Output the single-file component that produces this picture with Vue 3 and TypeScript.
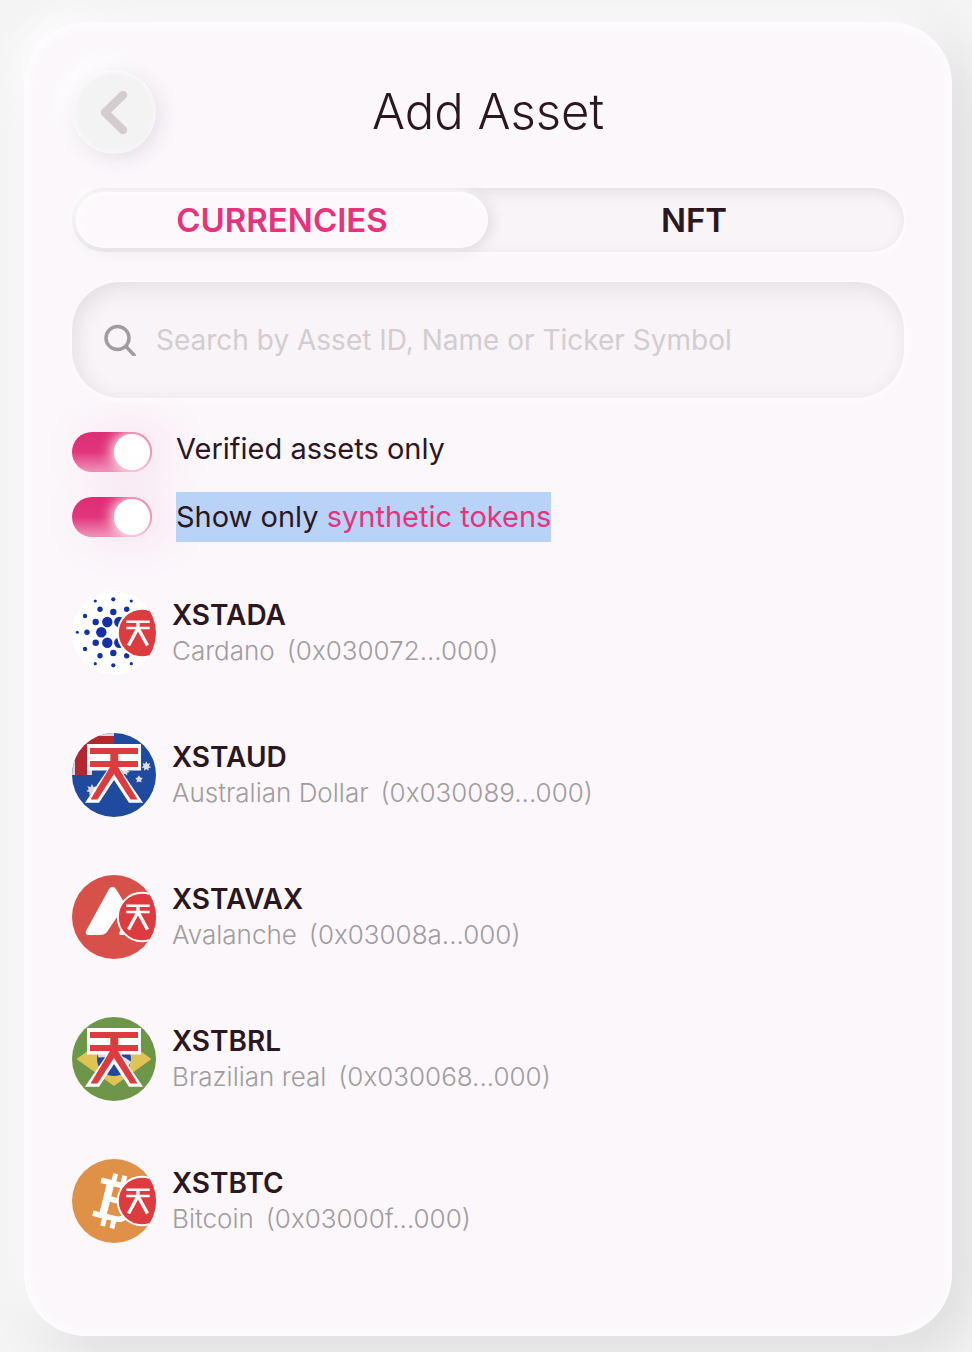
<script setup lang="ts">
import { ref } from 'vue'

type IconKind = 'ada' | 'aud' | 'avax' | 'brl' | 'btc'

interface Asset {
  icon: IconKind
  symbol: string
  name: string
  address: string
}

const tabs = ['CURRENCIES', 'NFT']
const activeTab = ref('CURRENCIES')
const search = ref('')
const verifiedOnly = ref(true)
const syntheticOnly = ref(true)

const assets: Asset[] = [
  { icon: 'ada', symbol: 'XSTADA', name: 'Cardano', address: '(0x030072...000)' },
  { icon: 'aud', symbol: 'XSTAUD', name: 'Australian Dollar', address: '(0x030089...000)' },
  { icon: 'avax', symbol: 'XSTAVAX', name: 'Avalanche', address: '(0x03008a...000)' },
  { icon: 'brl', symbol: 'XSTBRL', name: 'Brazilian real', address: '(0x030068...000)' },
  { icon: 'btc', symbol: 'XSTBTC', name: 'Bitcoin', address: '(0x03000f...000)' },
]

// x, y, radius of every dot in the Cardano mark
const adaDots: [number, number, number][] = [
  [41.3, 8.3, 2.1], [23.3, 10, 1.6], [59.3, 10, 1.6], [28, 18.3, 2.7], [54.7, 18.3, 2.7],
  [41.3, 21, 3.2], [13, 25, 2.2], [23.7, 31, 3.2], [35.3, 31, 5.2], [47.3, 31, 5.2],
  [5.3, 41.3, 1.5], [15, 41.3, 2.7], [29.3, 41.3, 5.2], [53.3, 41.3, 5.2], [23.7, 51.7, 3.2],
  [35.3, 51.7, 5.2], [47.3, 51.7, 5.2], [13, 58, 2.2], [41.3, 62, 3.2], [28, 64.7, 2.7],
  [54.7, 64.7, 2.7], [23.3, 72.7, 1.6], [59.3, 72.7, 1.6], [41.3, 74.3, 2.1],
]

function star(cx: number, cy: number, r: number, points = 7): string {
  const out: string[] = []
  for (let i = 0; i < points * 2; i++) {
    const radius = i % 2 ? r * 0.55 : r
    const a = (Math.PI * i) / points - Math.PI / 2
    out.push(`${(cx + radius * Math.cos(a)).toFixed(1)},${(cy + radius * Math.sin(a)).toFixed(1)}`)
  }
  return out.join(' ')
}

const audStars = [star(74.3, 33.3, 5), star(67, 46.3, 4, 5), star(20, 57, 6), star(53, 38, 5)]
</script>

<template>
  <main class="card">
    <header class="header">
      <button class="back" type="button" aria-label="Back">
        <svg viewBox="0 0 84 84" aria-hidden="true">
          <path d="M51 25L33 42.5L51 60" fill="none" stroke="#d3cdcf" stroke-width="8.5" stroke-linecap="round" stroke-linejoin="round" />
        </svg>
      </button>
      <h1>Add Asset</h1>
    </header>

    <div class="tabs" role="tablist">
      <button
        v-for="tab in tabs"
        :key="tab"
        class="tab"
        :class="{ active: tab === activeTab }"
        type="button"
        role="tab"
        :aria-selected="tab === activeTab"
        @click="activeTab = tab"
      >{{ tab }}</button>
    </div>

    <label class="search">
      <svg viewBox="0 0 32 32" aria-hidden="true">
        <circle cx="13.5" cy="14" r="11.5" fill="none" stroke="#a19c9d" stroke-width="3.5" />
        <path d="M22 22.5L30 31" stroke="#a19c9d" stroke-width="3.5" stroke-linecap="round" />
      </svg>
      <input v-model="search" type="text" aria-label="Search assets" placeholder="Search by Asset ID, Name or Ticker Symbol">
    </label>

    <section class="filters">
      <div class="switches">
        <input id="verified" v-model="verifiedOnly" class="switch" type="checkbox" role="switch">
        <input id="synthetic" v-model="syntheticOnly" class="switch" type="checkbox" role="switch">
      </div>
      <div class="labels">
        <label for="verified">Verified assets only</label>
        <label for="synthetic" class="selected">Show only <a href="#synthetic">synthetic tokens</a></label>
      </div>
    </section>

    <ul class="assets">
      <li v-for="asset in assets" :key="asset.symbol" class="asset">
        <svg class="icon" viewBox="0 0 84 84" aria-hidden="true">
          <g v-if="asset.icon === 'ada'">
            <rect width="84" height="84" fill="#fff" />
            <circle v-for="(d, i) in adaDots" :key="i" :cx="d[0]" :cy="d[1]" :r="d[2]" fill="#1531a8" />
          </g>
          <g v-else-if="asset.icon === 'aud'">
            <rect width="84" height="84" fill="#1f4a9e" />
            <rect width="42" height="42" fill="#d9d8dc" />
            <path d="M3 3H42V37H15V42H3Z" fill="#b5272f" />
            <path d="M20 25H42V42H20Z" fill="#1f4a9e" />
            <polygon v-for="(s, i) in audStars" :key="i" :points="s" fill="#dcdde2" />
          </g>
          <g v-else-if="asset.icon === 'avax'">
            <rect width="84" height="84" fill="#d8504a" />
            <path d="M37 14Q40.5 9.5 44 14L51 25.5Q53 29 51 33L35 57Q32.500 60 28 60H17Q12 60 14.5 55ZM47.5 57L56 44V60H48Q46.5 59 47.5 57Z" fill="#fff" />
          </g>
          <g v-else-if="asset.icon === 'brl'">
            <rect width="84" height="84" fill="#6e9648" />
            <path d="M4.5 42L42 15L79.5 42L42 69Z" fill="#dfc355" />
            <circle cx="42" cy="42" r="17" fill="#1f4a9e" />
            <path d="M26 38Q44 36 58 47" fill="none" stroke="#dcdde2" stroke-width="5" />
          </g>
          <g v-else>
            <rect width="84" height="84" fill="#df9147" />
            <g transform="translate(42 42) rotate(14)" fill="none" stroke="#fff">
              <path d="M-17.5-17H5C17-17 17-1 5-1H-7M5-1C20-1 20 17 5 17H-17.5" stroke-width="5.5" />
              <path d="M-7.5-17V17" stroke-width="7.5" />
              <path d="M-5-27V-17M4.5-27V-17M-5 17V27M4.5 17V27" stroke-width="5" />
            </g>
          </g>

          <g v-if="asset.icon === 'aud' || asset.icon === 'brl'">
            <path d="M15 11H69V37.5H49L71 69.7H57L42 47L27 69.7H13L35 37.5H15Z" fill="#fff" />
            <path d="M18 15H66V21H46.3V28H66V34H46L65.5 66.5H58.5L42 41L25.5 66.5H18.5L38 34H18V28H38.3V21H18Z" fill="#dc3b3f" />
          </g>
          <g v-else>
            <circle cx="70" cy="42" r="24.2" fill="#dc3b3f" stroke="#fff" stroke-width="2" />
            <path d="M54.3 30.8H77.7M54.3 37H77.7" stroke="#fff" stroke-width="2.5" />
            <path d="M66 31V38M66 37L56.5 54.5M66 37L75.5 54.5" fill="none" stroke="#fff" stroke-width="3.4" />
          </g>
        </svg>
        <div class="info">
          <strong>{{ asset.symbol }}</strong>
          <span class="details"><span>{{ asset.name }}</span><span>{{ asset.address }}</span></span>
        </div>
      </li>
    </ul>
  </main>
</template>

<style>
body {
  margin: 0;
  background: #f5f4f4;
}
</style>

<style scoped>
.card {
  margin: 22px 20px 16px 24px;
  padding: 48px 48px 64px;
  border-radius: 62px;
  background: #fbf7fb;
  color: #2a171f;
  font-family: Inter, "Liberation Sans", sans-serif;
  box-shadow:
    20px 20px 60px rgba(0, 0, 0, 0.1),
    -10px -10px 30px #fff,
    inset 1px 1px 20px #fff;
}

.header {
  display: grid;
  grid-template-columns: 84px 1fr 84px;
  align-items: center;
}

.back {
  width: 84px;
  height: 84px;
  padding: 0;
  border: 0;
  border-radius: 50%;
  background: #f4f3f4;
  box-shadow:
    4px 4px 20px rgba(80, 50, 70, 0.12),
    -10px -10px 30px #fff,
    inset 1px 1px 6px #fff;
}

.back svg {
  display: block;
}

h1 {
  margin: 0;
  font-size: 49px;
  font-weight: 300;
  line-height: 80px;
  text-align: center;
}

.tabs {
  display: grid;
  grid-template-columns: 1fr 1fr;
  margin-top: 34px;
  padding: 4px;
  border-radius: 32px;
  background: #f8f4f7;
  box-shadow:
    1px 1px 10px #fff,
    inset 2px 4px 14px rgba(60, 40, 50, 0.1);
}

.tab {
  height: 56px;
  padding: 0;
  border: 0;
  border-radius: 28px;
  background: none;
  color: inherit;
  font: 600 33px/56px Inter, "Liberation Sans", sans-serif;
}

.tab.active {
  background: #fcf8fb;
  color: #e6337b;
  box-shadow:
    4px 2px 14px rgba(60, 40, 50, 0.12),
    -4px -4px 10px #fff,
    inset 1px 1px 8px #fff;
}

.search {
  display: flex;
  align-items: center;
  gap: 20px;
  height: 116px;
  margin-top: 30px;
  padding: 0 32px;
  border-radius: 48px;
  background: #f8f4f7;
  box-shadow:
    1px 1px 10px #fff,
    inset 4px 6px 22px rgba(60, 40, 50, 0.1);
}

.search svg {
  flex: none;
  width: 32px;
  height: 32px;
}

.search input {
  flex: 1;
  min-width: 0;
  height: 56px;
  padding: 0;
  border: 0;
  outline: 0;
  background: none;
  color: inherit;
  font: 400 28px/56px Inter, "Liberation Sans", sans-serif;
}

.search input::placeholder {
  color: #d3cdcf;
  opacity: 1;
}

.filters {
  display: flex;
  gap: 24px;
  margin-top: 26px;
}

.switches {
  display: flex;
  flex-direction: column;
  gap: 25px;
  padding-top: 8px;
}

.switch {
  appearance: none;
  display: flex;
  align-items: center;
  box-sizing: border-box;
  width: 80px;
  height: 40px;
  margin: 0;
  padding: 2px;
  border-radius: 20px;
  background: #d8d2d5;
  overflow: hidden;
}

.switch::before {
  content: "";
  width: 36px;
  height: 36px;
  border-radius: 50%;
  background: #fff;
}

.switch:checked {
  justify-content: flex-end;
  background: linear-gradient(#dc2d75, #e2357c 50%, #ee8db5 95%);
  box-shadow: 16px 0 44px rgba(240, 130, 180, 0.18);
}

.switch:checked::before {
  box-shadow: 0 0 14px 2px #fff;
}

.labels {
  display: flex;
  flex-direction: column;
  align-items: flex-start;
  gap: 18px;
  font-size: 29px;
  line-height: 50px;
}

.selected {
  background: #b9d3f8;
}

.selected a {
  color: #e6337b;
  text-decoration: none;
}

.assets {
  margin: 20px 0 0;
  padding: 0;
  list-style: none;
}

.asset {
  display: flex;
  align-items: center;
  gap: 16px;
  padding: 29px 0;
}

.icon {
  flex: none;
  width: 84px;
  height: 84px;
  border-radius: 50%;
}

.info {
  display: flex;
  flex-direction: column;
  line-height: 36px;
}

.info strong {
  font-size: 28px;
  font-weight: 600;
}

.details {
  display: flex;
  gap: 12px;
  color: #a19c9d;
  font-size: 26px;
  font-weight: 300;
}
</style>
